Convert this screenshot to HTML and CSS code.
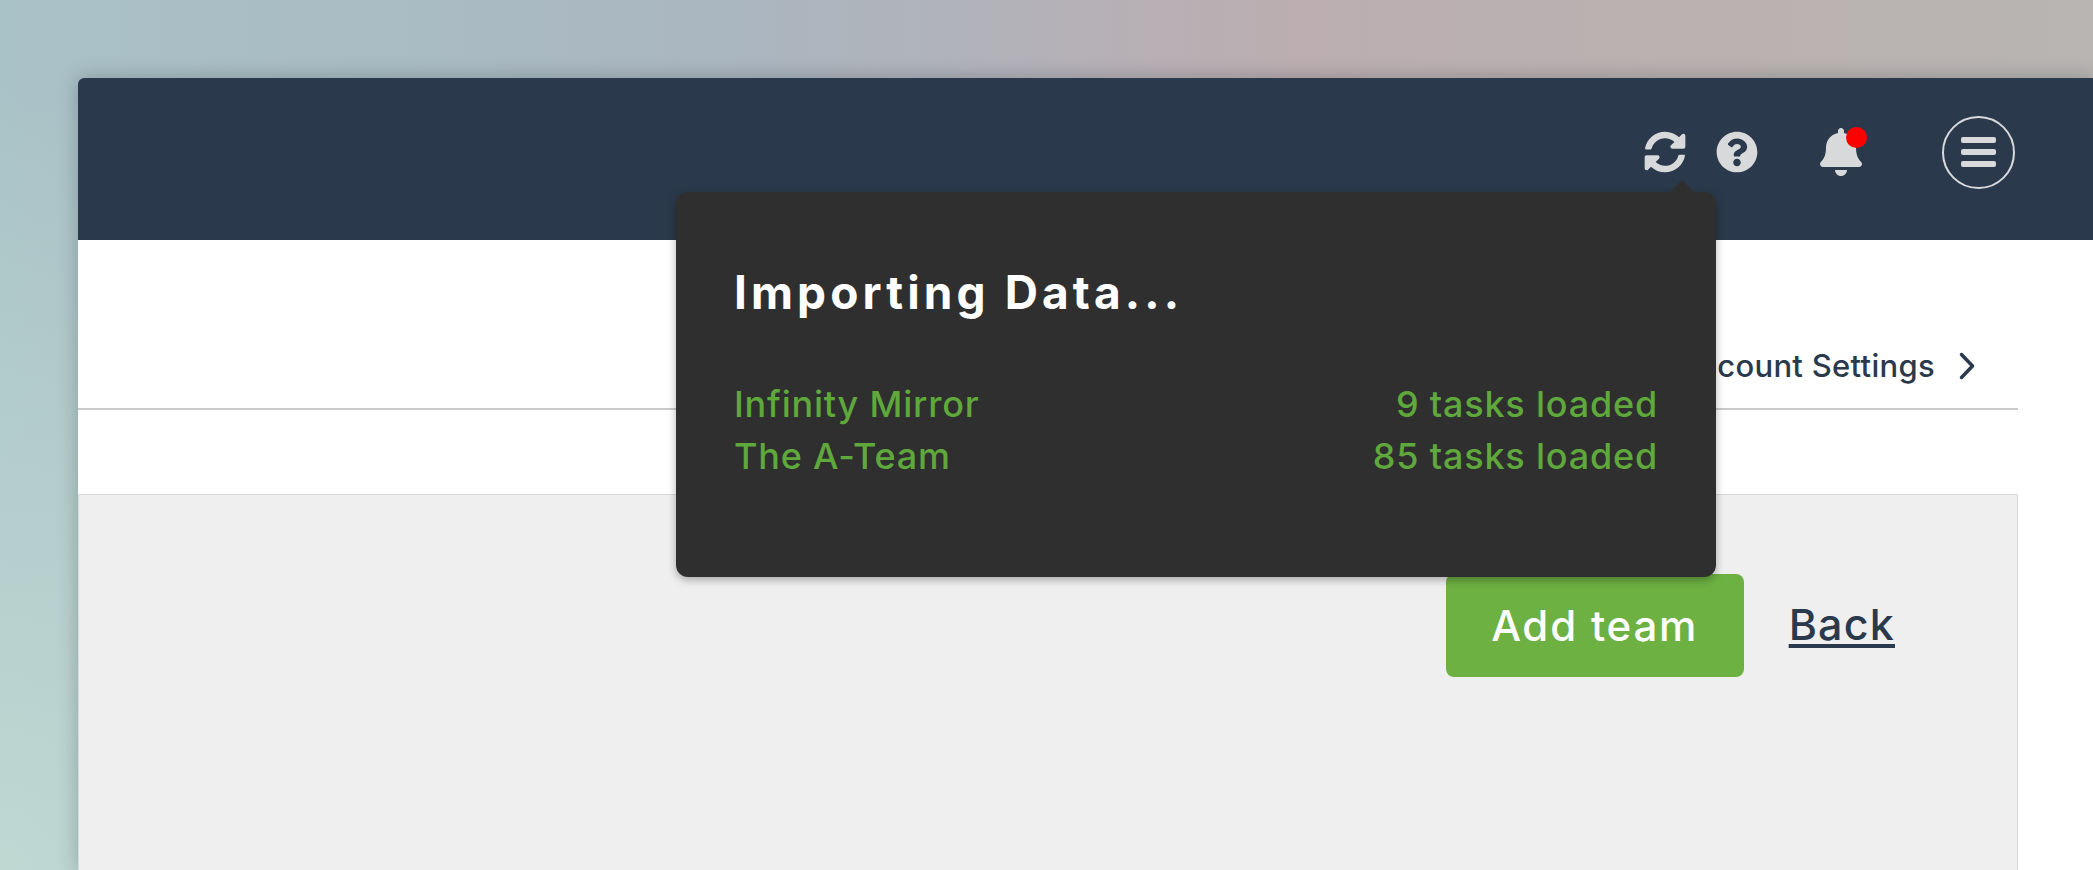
FILE: index.html
```html
<!DOCTYPE html>
<html lang="en">
<head>
    <meta charset="UTF-8">
    <title>Teams</title>
    <link rel="stylesheet" href="styles.css">
</head>
<body>
    <div class="window">
        <header class="topbar">
            <svg class="icon icon-sync" viewBox="0 0 512 512"><path d="M370.72 133.28C339.458 104.008 298.888 87.962 255.848 88c-77.458.068-144.328 53.178-162.791 126.85-1.344 5.363-6.122 9.15-11.651 9.15H24.103c-7.498 0-13.194-6.807-11.807-14.176C33.933 94.924 134.813 8 256 8c66.448 0 126.791 26.136 171.315 68.685L463.03 40.97C478.149 25.851 504 36.559 504 57.941V192c0 13.255-10.745 24-24 24H345.941c-21.382 0-32.09-25.851-16.971-40.971l41.75-41.749zM32 296h134.059c21.382 0 32.09 25.851 16.971 40.971l-41.75 41.75c31.262 29.273 71.835 45.319 114.876 45.28 77.418-.07 144.315-53.144 162.787-126.849 1.344-5.363 6.122-9.15 11.651-9.15h57.304c7.498 0 13.194 6.807 11.807 14.176C478.067 417.076 377.187 504 256 504c-66.448 0-126.791-26.136-171.315-68.685L48.97 471.03C33.851 486.149 8 475.441 8 454.059V320c0-13.255 10.745-24 24-24z"/></svg>
            <svg class="icon icon-help" viewBox="0 0 512 512"><path d="M504 256c0 136.997-111.043 248-248 248S8 392.997 8 256C8 119.083 119.043 8 256 8s248 111.083 248 248zM262.655 90c-54.497 0-89.255 22.957-116.549 63.758-3.536 5.286-2.353 12.415 2.715 16.258l34.699 26.31c5.205 3.947 12.621 3.008 16.665-2.122 17.864-22.658 30.113-35.797 57.303-35.797 20.429 0 45.698 13.148 45.698 32.958 0 14.976-12.363 22.667-32.534 33.976C247.128 238.528 216 254.941 216 296v4c0 6.627 5.373 12 12 12h56c6.627 0 12-5.373 12-12v-1.333c0-28.462 83.186-29.647 83.186-106.667 0-58.002-60.165-102-116.531-102zM256 338c-25.365 0-46 20.635-46 46 0 25.364 20.635 46 46 46s46-20.636 46-46c0-25.365-20.635-46-46-46z"/></svg>
            <div class="bell">
                <svg class="icon icon-bell" viewBox="0 0 448 512"><path d="M224 512c35.32 0 63.97-28.65 63.97-64H160.03c0 35.35 28.65 64 63.97 64zm215.39-149.71c-19.32-20.76-55.47-51.99-55.47-154.29 0-77.7-54.48-139.9-127.94-155.16V32c0-17.67-14.32-32-31.98-32s-31.98 14.33-31.98 32v20.84C118.56 68.1 64.08 130.3 64.08 208c0 102.3-36.15 133.53-55.47 154.29-6 6.45-8.66 14.16-8.61 21.71.11 16.4 12.98 32 32.1 32h383.8c19.12 0 32-15.6 32.1-32 .05-7.55-2.61-15.27-8.61-21.71z"/></svg>
                <span class="dot"></span>
            </div>
            <div class="menu-btn">
                <span></span>
                <span></span>
                <span></span>
            </div>
        </header>

        <nav class="tabs">
            <a class="tab">Account Settings</a>
            <svg class="chevron" viewBox="0 0 16 28"><path d="M2.5 2.5 13.5 14 2.5 25.5"/></svg>
        </nav>

        <section class="panel">
            <button class="add-btn">Add team</button>
            <a class="back">Back</a>
        </section>

        <div class="import-pop">
            <h2>Importing Data...</h2>
            <div class="import-row"><span>Infinity Mirror</span><span>9 tasks loaded</span></div>
            <div class="import-row"><span>The A-Team</span><span>85 tasks loaded</span></div>
        </div>
    </div>
</body>
</html>
```

FILE: styles.css
```css
html, body { height: 100%; margin: 0; overflow: hidden; }
body {
    box-sizing: border-box;
    padding: 78px 0 0 78px;
    font-family: Inter, "Liberation Sans", sans-serif;
    background:
        radial-gradient(circle at 0 100%, #bfd8d2 0, rgba(191, 216, 210, 0) 800px),
        linear-gradient(90deg, #a9c2c7 0, #aab6c0 35%, #bcaeb1 62%, #b9b2b1 85%, #b8b5b3 100%);
}

.window {
    position: relative;
    height: 792px;
    background: #fff;
    border-radius: 6px 0 0 0;
    box-shadow: 0 0 20px rgba(40, 50, 60, 0.3);
}

.topbar {
    display: flex;
    align-items: center;
    justify-content: flex-end;
    box-sizing: border-box;
    height: 162px;
    padding: 0 78px 14px 0;
    background: #2a394b;
    border-radius: 6px 0 0 0;
}
.icon { display: block; fill: #d8d9db; }
.icon-sync, .icon-help { width: 42px; height: 42px; }
.icon-help { margin-left: 30px; }
.bell { position: relative; margin-left: 62px; }
.icon-bell { width: 42px; height: 48px; }
.dot {
    position: absolute;
    top: -1px;
    left: 26px;
    width: 21px;
    height: 21px;
    border-radius: 50%;
    background: #ff0000;
}
.menu-btn {
    display: flex;
    flex-direction: column;
    justify-content: center;
    gap: 6px;
    box-sizing: border-box;
    width: 73px;
    height: 73px;
    margin-left: 80px;
    padding: 0 17px;
    border: 2px solid #d8d9db;
    border-radius: 50%;
}
.menu-btn span { display: block; height: 6px; border-radius: 2px; background: #d8d9db; }

.tabs {
    display: flex;
    align-items: center;
    justify-content: flex-end;
    box-sizing: border-box;
    height: 170px;
    margin-right: 75px;
    padding: 83px 43px 0 0;
    border-bottom: 2px solid #c9cacb;
    color: #2a394b;
    font-size: 31px;
    font-weight: 500;
    letter-spacing: 0.3px;
}
.chevron { width: 16px; height: 28px; margin-left: 24px; fill: none; stroke: #2a394b; stroke-width: 3.5; stroke-linecap: round; stroke-linejoin: round; }

.panel {
    display: flex;
    align-items: flex-start;
    justify-content: flex-end;
    gap: 45px;
    box-sizing: border-box;
    height: 400px;
    margin: 84px 75px 0 0;
    padding: 79px 122px 0 0;
    background: #efefef;
    border: 1px solid #d9d9d9;
}
.add-btn {
    width: 298px;
    height: 103px;
    border: 0;
    border-radius: 8px;
    background: #6db142;
    color: #fff;
    font: 500 42px Inter, "Liberation Sans", sans-serif;
    letter-spacing: 1.8px;
}
.back {
    margin-top: 24px;
    color: #2a394b;
    font-size: 43px;
    font-weight: 500;
    letter-spacing: 1.2px;
    text-decoration: underline;
    text-underline-offset: 4px;
}

.import-pop {
    position: absolute;
    top: 114px;
    left: 598px;
    box-sizing: border-box;
    width: 1040px;
    height: 385px;
    padding: 75px 58px 0;
    border-radius: 12px;
    background: #2f2f2f;
    color: #5fa83c;
    box-shadow: 0 3px 8px rgba(0, 0, 0, 0.3);
}
.import-pop::before {
    content: "";
    position: absolute;
    top: -12px;
    left: 994px;
    border: 12px solid transparent;
    border-top: 0;
    border-bottom-color: #2f2f2f;
}
.import-pop h2 {
    margin: 0 0 61px;
    color: #fff;
    font-size: 46px;
    font-weight: 700;
    line-height: 50px;
    letter-spacing: 4.1px;
}
.import-row {
    display: flex;
    justify-content: space-between;
    font-size: 36px;
    font-weight: 500;
    line-height: 52px;
    letter-spacing: 0.8px;
}
```
